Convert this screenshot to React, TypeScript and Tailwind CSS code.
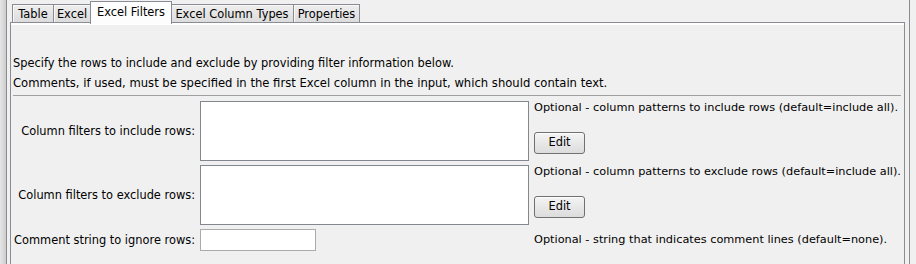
import React from 'react';

const font = { fontFamily: '"DejaVu Sans", Verdana, sans-serif' };

const tabs = [
    { label: 'Table', width: 'w-[42px]' },
    { label: 'Excel', width: 'w-[38px]' },
    { label: 'Excel Filters', width: 'w-[82px]', selected: true },
    { label: 'Excel Column Types', width: 'w-[124px]' },
    { label: 'Properties', width: 'w-[67px]' },
];

const EditButton: React.FC = () => (
    <button className="w-[51px] h-[22px] rounded-[3px] border border-[#707070] bg-gradient-to-b from-[#f4f4f4] to-[#dcdcdc] text-[11.4px] text-black leading-none shadow-[inset_0_1px_0_#fff]">
        Edit
    </button>
);

const Label: React.FC<{ children: React.ReactNode }> = ({ children }) => (
    <div className="flex items-center justify-end text-[11.4px] leading-[14px] text-black whitespace-nowrap">{children}</div>
);

const Hint: React.FC<{ children: React.ReactNode }> = ({ children }) => (
    <span className="text-[11.3px] leading-[14px] whitespace-nowrap">{children}</span>
);

export default function App() {
    return (
        <div className="w-[916px] h-[264px] bg-[#f0f0f0] flex overflow-hidden text-black" style={font}>
            {/* left edge of the parent window */}
            <div className="w-[6px] bg-gradient-to-r from-[#e6e6e6] to-[#cdcdcd]" />
            <div className="w-px bg-[#8c8c8c]" />
            <div className="w-[3px]" />

            <div className="w-[895px] flex flex-col">
                {/* tabs */}
                <div className="h-[22px] flex items-end pl-[2px] shrink-0">
                    {tabs.map(tab =>
                        tab.selected ? (
                            <div
                                key={tab.label}
                                className={`${tab.width} h-[23px] -mb-[2px] -mx-px relative z-10 bg-[#fdfdfd] border border-b-0 border-[#898c95] flex items-start justify-center pt-[3px] text-[11.4px] leading-[14px] whitespace-nowrap`}
                            >
                                {tab.label}
                            </div>
                        ) : (
                            <div
                                key={tab.label}
                                className={`${tab.width} h-[18px] bg-gradient-to-b from-[#eeeeee] to-[#dcdcdc] border border-b-0 border-[#898c95] -ml-px first:ml-0 flex items-center justify-center text-[11.4px] leading-[14px] whitespace-nowrap shadow-[inset_1px_1px_0_#f8f8f8]`}
                            >
                                {tab.label}
                            </div>
                        )
                    )}
                </div>

                {/* panel */}
                <div className="flex-1 border border-b-0 border-[#898c95] flex flex-col">
                    <div className="h-[2px] bg-white shrink-0" />
                    <div className="pl-[2px] pr-[2px] pt-[28px] flex flex-col">
                        <p className="text-[11.4px] leading-[20px] whitespace-nowrap">
                            Specify the rows to include and exclude by providing filter information below.
                        </p>
                        <p className="text-[11.6px] leading-[20px] whitespace-nowrap">
                            Comments, if used, must be specified in the first Excel column in the input, which should contain text.
                        </p>
                        <div className="mt-[2px] h-px bg-[#a0a0a0] mr-[1px]" />

                        <div className="mt-[5px] grid grid-cols-[182px_329px_1fr] grid-rows-[60px_60px_22px] gap-x-[5px] gap-y-[4px]">
                            <Label>Column filters to include rows:</Label>
                            <div className="bg-white border border-[#828790]" />
                            <div className="flex flex-col items-start">
                                <Hint>Optional - column patterns to include rows (default=include all).</Hint>
                                <div className="mt-[14px]">
                                    <EditButton />
                                </div>
                            </div>

                            <Label>Column filters to exclude rows:</Label>
                            <div className="bg-white border border-[#828790]" />
                            <div className="flex flex-col items-start">
                                <Hint>Optional - column patterns to exclude rows (default=include all).</Hint>
                                <div className="mt-[14px]">
                                    <EditButton />
                                </div>
                            </div>

                            <Label>Comment string to ignore rows:</Label>
                            <div className="flex">
                                <div className="w-[116px] h-[22px] bg-white border border-[#ababab]" />
                            </div>
                            <div className="flex items-center">
                                <Hint>Optional - string that indicates comment lines (default=none).</Hint>
                            </div>
                        </div>
                    </div>
                </div>
            </div>

            {/* right edge */}
            <div className="w-[4px]" />
            <div className="w-px bg-[#8c8c8c]" />
            <div className="flex-1 bg-[#f0f0f0]" />
        </div>
    );
}
